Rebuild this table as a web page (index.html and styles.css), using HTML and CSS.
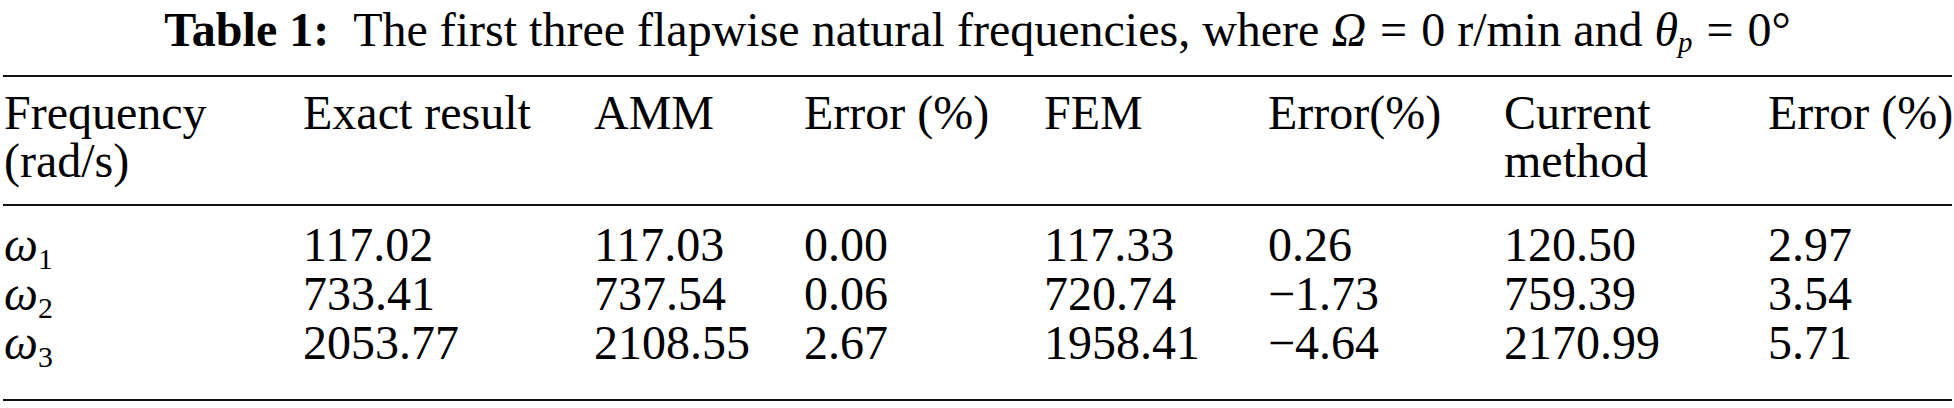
FILE: index.html
```html
<!DOCTYPE html>
<html>
<head>
    <meta charset="UTF-8">
    <title>Table 1</title>
    <link rel="stylesheet" href="styles.css">
</head>
<body>
<div class="tableWrap">
    <div class="caption"><b>Table 1:</b>&ensp;The first three flapwise natural frequencies, where <i>Ω</i><span class="eq">=</span>0 r/min and <i>θ<sub>p</sub></i><span class="eq">=</span>0°</div>
    <table class="freqTable">
        <colgroup>
            <col class="c1">
            <col class="c2">
            <col class="c3">
            <col class="c4">
            <col class="c5">
            <col class="c6">
            <col class="c7">
            <col class="c8">
        </colgroup>
        <thead>
        <tr>
            <th>Frequency<br>(rad/s)</th>
            <th>Exact result</th>
            <th>AMM</th>
            <th>Error (%)</th>
            <th>FEM</th>
            <th>Error(%)</th>
            <th>Current<br>method</th>
            <th>Error (%)</th>
        </tr>
        </thead>
        <tbody>
        <tr>
            <td><i>ω</i><sub>1</sub></td>
            <td>117.02</td>
            <td>117.03</td>
            <td>0.00</td>
            <td>117.33</td>
            <td>0.26</td>
            <td>120.50</td>
            <td>2.97</td>
        </tr>
        <tr>
            <td><i>ω</i><sub>2</sub></td>
            <td>733.41</td>
            <td>737.54</td>
            <td>0.06</td>
            <td>720.74</td>
            <td>−1.73</td>
            <td>759.39</td>
            <td>3.54</td>
        </tr>
        <tr>
            <td><i>ω</i><sub>3</sub></td>
            <td>2053.77</td>
            <td>2108.55</td>
            <td>2.67</td>
            <td>1958.41</td>
            <td>−4.64</td>
            <td>2170.99</td>
            <td>5.71</td>
        </tr>
        </tbody>
    </table>
</div>
</body>
</html>
```

FILE: styles.css
```css
* {
    margin: 0;
    padding: 0;
}

body {
    font-family: "Liberation Serif", "Times New Roman", serif;
    font-size: 48px;
    color: #000;
    background: #fff;
}

.tableWrap {
    width: 1949px;
    margin-left: 3px;
}

.caption {
    text-align: center;
    line-height: 46px;
    margin-top: 7px;
    margin-bottom: 22px;
    white-space: nowrap;
}

.caption .eq {
    margin: 0 14px;
}

.caption sub {
    font-size: 60%;
    vertical-align: -6px;
    line-height: 0;
}

.freqTable {
    width: 1949px;
    table-layout: fixed;
    border-collapse: collapse;
    border-top: 2px solid #111;
    border-bottom: 2px solid #111;
}

.freqTable .c1 { width: 299px; }
.freqTable .c2 { width: 291px; }
.freqTable .c3 { width: 210px; }
.freqTable .c4 { width: 240px; }
.freqTable .c5 { width: 224px; }
.freqTable .c6 { width: 236px; }
.freqTable .c7 { width: 264px; }
.freqTable .c8 { width: 185px; }

.freqTable th,
.freqTable td {
    text-align: left;
    vertical-align: top;
    font-weight: normal;
    white-space: nowrap;
    padding: 0 0 0 1px;
}

.freqTable thead tr {
    border-bottom: 2px solid #111;
}

.freqTable th {
    line-height: 48px;
    padding-top: 12px;
    padding-bottom: 19px;
}

.freqTable td {
    line-height: 49px;
}

.freqTable tbody tr:first-child td {
    padding-top: 14px;
}

.freqTable tbody tr:last-child td {
    padding-bottom: 32px;
}

.freqTable sub {
    font-size: 62%;
    vertical-align: -8px;
    line-height: 0;
}
```
